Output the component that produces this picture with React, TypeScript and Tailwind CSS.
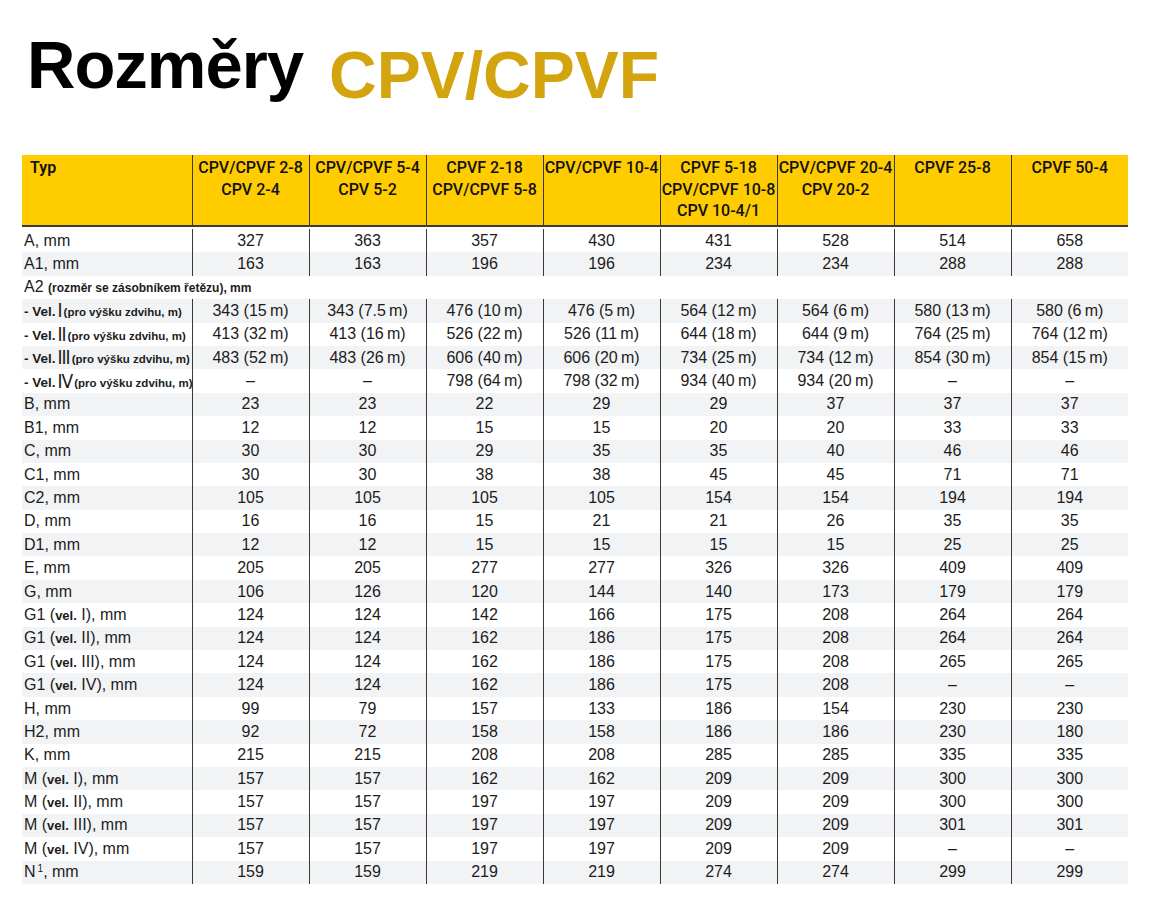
import React from "react";

const TS = "\u2009";
const m = (n: string, h: string) => `${n} (${h}${TS}m)`;

type Row = { label: React.ReactNode; vals: string[] };

const Roman = ({ r }: { r: string }) => (
  <span className="font-normal text-[19px] leading-none tracking-[-1px] align-[-1px] mx-[2px]" style={{ fontFamily: '"DejaVu Sans Condensed","Liberation Sans Narrow","Liberation Sans",sans-serif', fontWeight: 200 }}>
    {r}
  </span>
);

const VelLabel = ({ r }: { r: string }) => (
  <span className="whitespace-nowrap">
    <span className="font-bold text-[13.5px]">- Vel.</span>
    <Roman r={r} />
    <span className="font-bold text-[11.5px]">(pro výšku zdvihu, m)</span>
  </span>
);

const VelSmall = ({ r, pre }: { r: string; pre: string }) => (
  <span className="whitespace-nowrap">
    {pre} (<span className="font-bold text-[13px]">vel.</span> {r}), mm
  </span>
);

const rows: Row[] = [
  { label: "A, mm", vals: ["327", "363", "357", "430", "431", "528", "514", "658"] },
  { label: "A1, mm", vals: ["163", "163", "196", "196", "234", "234", "288", "288"] },
  { label: "A2", vals: [] },
  { label: <VelLabel r="I" />, vals: [m("343", "15"), m("343", "7.5"), m("476", "10"), m("476", "5"), m("564", "12"), m("564", "6"), m("580", "13"), m("580", "6")] },
  { label: <VelLabel r="II" />, vals: [m("413", "32"), m("413", "16"), m("526", "22"), m("526", "11"), m("644", "18"), m("644", "9"), m("764", "25"), m("764", "12")] },
  { label: <VelLabel r="III" />, vals: [m("483", "52"), m("483", "26"), m("606", "40"), m("606", "20"), m("734", "25"), m("734", "12"), m("854", "30"), m("854", "15")] },
  { label: <VelLabel r="IV" />, vals: ["–", "–", m("798", "64"), m("798", "32"), m("934", "40"), m("934", "20"), "–", "–"] },
  { label: "B, mm", vals: ["23", "23", "22", "29", "29", "37", "37", "37"] },
  { label: "B1, mm", vals: ["12", "12", "15", "15", "20", "20", "33", "33"] },
  { label: "C, mm", vals: ["30", "30", "29", "35", "35", "40", "46", "46"] },
  { label: "C1, mm", vals: ["30", "30", "38", "38", "45", "45", "71", "71"] },
  { label: "C2, mm", vals: ["105", "105", "105", "105", "154", "154", "194", "194"] },
  { label: "D, mm", vals: ["16", "16", "15", "21", "21", "26", "35", "35"] },
  { label: "D1, mm", vals: ["12", "12", "15", "15", "15", "15", "25", "25"] },
  { label: "E, mm", vals: ["205", "205", "277", "277", "326", "326", "409", "409"] },
  { label: "G, mm", vals: ["106", "126", "120", "144", "140", "173", "179", "179"] },
  { label: <VelSmall pre="G1" r="I" />, vals: ["124", "124", "142", "166", "175", "208", "264", "264"] },
  { label: <VelSmall pre="G1" r="II" />, vals: ["124", "124", "162", "186", "175", "208", "264", "264"] },
  { label: <VelSmall pre="G1" r="III" />, vals: ["124", "124", "162", "186", "175", "208", "265", "265"] },
  { label: <VelSmall pre="G1" r="IV" />, vals: ["124", "124", "162", "186", "175", "208", "–", "–"] },
  { label: "H, mm", vals: ["99", "79", "157", "133", "186", "154", "230", "230"] },
  { label: "H2, mm", vals: ["92", "72", "158", "158", "186", "186", "230", "180"] },
  { label: "K, mm", vals: ["215", "215", "208", "208", "285", "285", "335", "335"] },
  { label: <VelSmall pre="M" r="I" />, vals: ["157", "157", "162", "162", "209", "209", "300", "300"] },
  { label: <VelSmall pre="M" r="II" />, vals: ["157", "157", "197", "197", "209", "209", "300", "300"] },
  { label: <VelSmall pre="M" r="III" />, vals: ["157", "157", "197", "197", "209", "209", "301", "301"] },
  { label: <VelSmall pre="M" r="IV" />, vals: ["157", "157", "197", "197", "209", "209", "–", "–"] },
  { label: <span>N<sup className="text-[10px] ml-[2px]">1</sup>, mm</span>, vals: ["159", "159", "219", "219", "274", "274", "299", "299"] },
];

const headers: string[][] = [
  ["CPV/CPVF 2-8", "CPV 2-4"],
  ["CPV/CPVF 5-4", "CPV 5-2"],
  ["CPVF 2-18", "CPV/CPVF 5-8"],
  ["CPV/CPVF 10-4"],
  ["CPVF 5-18", "CPV/CPVF 10-8", "CPV 10-4/1"],
  ["CPV/CPVF 20-4", "CPV 20-2"],
  ["CPVF 25-8"],
  ["CPVF 50-4"],
];

export default function App() {
  return (
    <div className="bg-white w-[1160px] h-[914px] px-[22px] pt-[31px] text-[#1c1c1c]" style={{ fontFamily: '"Liberation Sans", Arial, sans-serif' }}>
      <div className="flex items-start h-[124px]">
        <span className="text-[67px] font-bold leading-none text-black ml-[5px] tracking-[-1px]">Rozměry</span>
        <span className="text-[66px] font-bold leading-none text-[#d4a40f] ml-[26px] mt-[11px]">CPV/CPVF</span>
      </div>
      <table className="table-fixed border-collapse w-[1106px]">
        <colgroup>
          <col className="w-[170px]" />
          {headers.map((_, i) => (
            <col key={i} className="w-[117px]" />
          ))}
        </colgroup>
        <thead>
          <tr className="bg-[#ffcc00] h-[71px] border-b-2 border-[#3a3a3a]" style={{ fontFamily: 'Roboto, "Liberation Sans", sans-serif' }}>
            <th className="align-top text-left pl-[8px] pt-[2px] text-[16px] leading-[21px] font-semibold text-[#111]">Typ</th>
            {headers.map((h, i) => (
              <th key={i} className="align-top text-center pt-[2px] text-[16px] leading-[21.5px] font-medium text-[#111] border-l border-[#3a3a3a] whitespace-nowrap">
                {h.map((l, j) => (
                  <div key={j}>{l}</div>
                ))}
              </th>
            ))}
          </tr>
        </thead>
        <tbody>
          <tr className="h-[3px]"><td colSpan={9}></td></tr>
          {rows.map((r, i) => {
            const bg = i % 2 === 1 ? "bg-[#f2f3f5]" : "bg-white";
            if (r.vals.length === 0) {
              return (
                <tr key={i} className={`${bg} h-[23.4px]`}>
                  <td colSpan={9} className="pl-[2px] text-[16px] leading-none whitespace-nowrap">
                    A2 <span className="font-bold text-[12px]">(rozměr se zásobníkem řetězu), mm</span>
                  </td>
                </tr>
              );
            }
            return (
              <tr key={i} className={`${bg} h-[23.4px]`}>
                <td className="pl-[2px] text-[16px] leading-none whitespace-nowrap">{r.label}</td>
                {r.vals.map((v, j) => (
                  <td key={j} className="text-center text-[16px] leading-none border-l border-[#3a3a3a] whitespace-nowrap">
                    {v}
                  </td>
                ))}
              </tr>
            );
          })}
        </tbody>
      </table>
    </div>
  );
}
